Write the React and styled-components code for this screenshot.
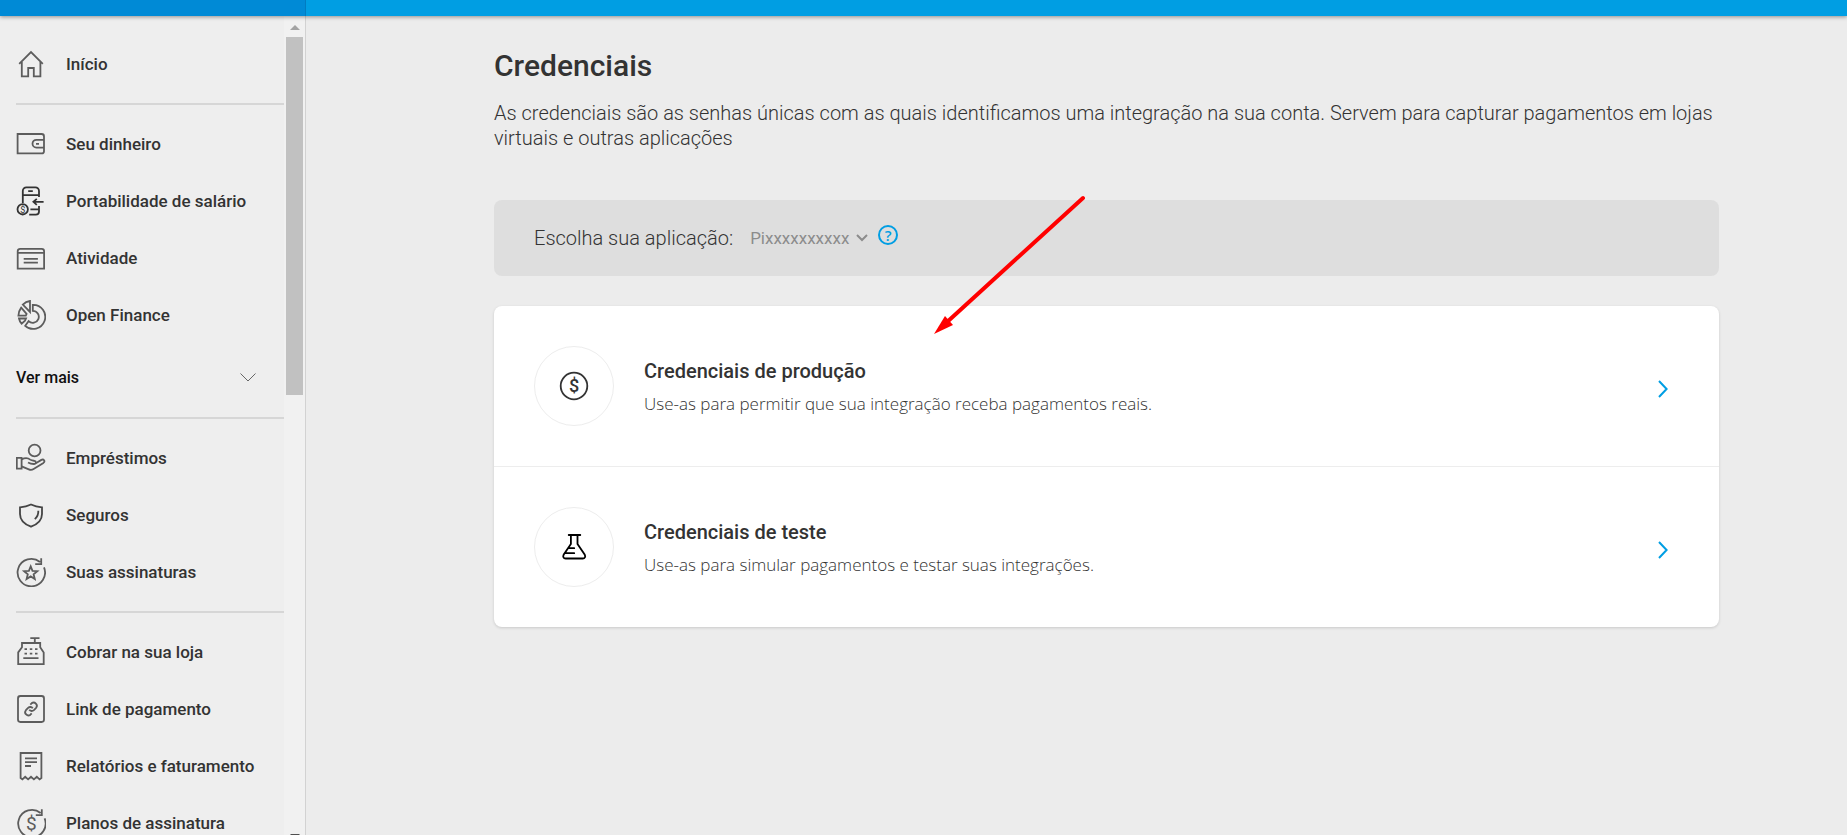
import React, { useState } from "react"
import styled, { createGlobalStyle } from "styled-components"

const GlobalStyle = createGlobalStyle`
	* {
		box-sizing: border-box;
	}
	body {
		margin: 0;
		background-color: #ececec;
		color: #333333;
		font-family: Roboto, "Open Sans", "Liberation Sans", sans-serif;
	}
`

// sidebar icons, all drawn on a 30x30 grid
const icons = {
	home: (
		<>
			<path d="M3.2 14.8 15 3l11.8 11.8" />
			<path d="M5.8 13v14.4h6.4V19h5.6v8.4h6.6V13" />
		</>
	),
	wallet: (
		<>
			<path d="M1.6 5h24A2.4 2.4 0 0 1 28 7.4v14.8a2.2 2.2 0 0 1-2.2 2.2H1.6z" />
			<path d="M28 10.8h-7.6a3.9 3.9 0 0 0 0 7.8H28M20 14.8h3" />
		</>
	),
	phone: (
		<>
			<path d="M6.8 17V5a3.6 3.6 0 0 1 3.6-3.6h9A3.6 3.6 0 0 1 23 5v6M6.8 9.2H23M12.2 5.2h4.6" />
			<path d="M23 20v5.4a3.2 3.2 0 0 1-3.2 3.2h-6.6M14.4 23.4H23M27.6 15.8H18M20.8 12.8l-3.4 3 3.4 3" />
			<circle cx="6.7" cy="23.3" r="5.2" />
			<text x="6.7" y="26.6">
				$
			</text>
		</>
	),
	activity: (
		<>
			<path d="M1.7 25.6V8.2a2.4 2.4 0 0 1 2.4-2.4h21.6a2.4 2.4 0 0 1 2.4 2.4v17.4zM2 9.8h26" />
			<path d="M7.7 15.8h14.2M7.7 19.6h14.2" />
		</>
	),
	finance: (
		<>
			<path d="M16.8 4.9a12 12 0 1 1-7.6 20.9l3.4-4.7a6 6 0 1 0 4.2-10.3z" />
			<path d="M14 1v11L6.8 4.6C8.8 2.6 11.2 1.4 14 1z" />
			<path d="M5.2 7.6l5.4 6.2-.8 1.9H2.4c.2-3.2 1.2-6 2.8-8.1z" />
			<path d="M3 18.5h7l-1 2.3-3.4 2.9c-1.4-1.5-2.2-3.2-2.6-5.2z" />
		</>
	),
	loan: (
		<>
			<circle cx="18.6" cy="7.5" r="5.9" />
			<path d="M.8 14.9h4.8v10.7H.8z" />
			<path d="M5.6 16.4c3.4-1.8 6.4-1.6 8.6.2 1.3 1 2.3 1 4.2 1.2 2 .3 2 3.1-.2 3.2-2.2.1-4.2-.4-6.2-1.5" />
			<path d="M19.8 20.3l5.6-3.4c2.2-1.2 4.2 1.3 2 3L17.6 26c-1.5 1-3.2 1.1-4.8.4l-7.2-3" />
		</>
	),
	shield: (
		<>
			<path d="M15 4.5c3.6 1.8 7.2 2.6 11 2.9V14c0 5.8-4.3 10.2-11 12.7C8.3 24.2 4 19.8 4 14V7.4c3.8-.3 7.4-1.1 11-2.9z" />
			<path d="M22.3 10.8c.2 3.6-.8 6-3.5 8.3" />
		</>
	),
	star: (
		<>
			<path d="M28 10.4a13.7 13.7 0 1 1-4-5.4M25.2 1.2v5.9h-6" />
			<path d="M14.7 9.4l1.8 4.5 4.8.3-3.7 3.1 1.2 4.7-4.1-2.6-4.1 2.6 1.2-4.7-3.7-3.1 4.8-.3z" />
		</>
	),
	register: (
		<>
			<path d="M14.3 1.2h9.2M18.8 1.2V6M6 6h18.2v4.2l3.5 5.2v11.8H2.2V15.4L6 10.2z" />
			<path d="M8.5 12.2H11M13.8 12.2h2.5M19 12.2h2.5M8.5 16.6H11M13.8 16.6h2.5M19 16.6h2.5M7.3 21.2h15.2" />
		</>
	),
	link: (
		<>
			<rect x="2" y="2" width="26" height="26" rx="2.4" />
			<path d="M13.2 15.8a3.2 3.2 0 0 0 4.7.3l2.2-2.3a3.2 3.2 0 0 0-4.5-4.5l-1.3 1.3M16.8 14.2a3.2 3.2 0 0 0-4.7-.3l-2.2 2.3a3.2 3.2 0 0 0 4.5 4.5l1.3-1.3" />
		</>
	),
	receipt: (
		<>
			<path d="M4.6 2h20.8v25l-1.8 1.4-2.8-2.6-2.9 2.6-2.9-2.6-2.9 2.6-2.9-2.6-2.8 2.6L4.6 27z" />
			<path d="M9 7.4h12M9 11.2h12M9 15h6" />
		</>
	),
	plan: (
		<>
			<path d="M28.6 10.4a13.7 13.7 0 1 1-4-5.4M25.8 1.2v5.9h-6" />
			<text x="15.4" y="22">
				$
			</text>
		</>
	),
}

const mainItems = [
	{ icon: "wallet", label: "Seu dinheiro" },
	{ icon: "phone", label: "Portabilidade de salário", color: "#333333" },
	{ icon: "activity", label: "Atividade" },
	{ icon: "finance", label: "Open Finance" },
]

const financialItems = [
	{ icon: "loan", label: "Empréstimos" },
	{ icon: "shield", label: "Seguros", color: "#444444" },
	{ icon: "star", label: "Suas assinaturas" },
]

const sellerItems = [
	{ icon: "register", label: "Cobrar na sua loja" },
	{ icon: "link", label: "Link de pagamento" },
	{ icon: "receipt", label: "Relatórios e faturamento" },
	{ icon: "plan", label: "Planos de assinatura" },
]

const NavItem = ({ item }) => (
	<li>
		<NavLink href="#">
			<NavIcon
				viewBox="0 0 30 30"
				$color={item.color}
				$fontSize={item.icon === "phone" ? 9 : 19}
				aria-hidden="true"
			>
				{icons[item.icon]}
			</NavIcon>
			{item.label}
		</NavLink>
	</li>
)

const CredentialItem = ({ title, text, children }) => (
	<CredentialLink href="#">
		<IconCircle>{children}</IconCircle>
		<CredentialText>
			<h2>{title}</h2>
			<p>{text}</p>
		</CredentialText>
		<ArrowRight viewBox="0 0 10 18" aria-hidden="true">
			<path d="M1 1l7.6 8L1 17" />
		</ArrowRight>
	</CredentialLink>
)

export default function App() {
	const [application, setApplication] = useState("Pixxxxxxxxxx")

	return (
		<Page>
			<GlobalStyle />
			<TopBar>
				<TopBarMenu />
			</TopBar>
			<Body>
				<Sidebar>
					<Nav aria-label="Menu principal">
						<NavGroup>
							<NavItem item={{ icon: "home", label: "Início" }} />
						</NavGroup>
						<NavGroup>
							{mainItems.map((item) => (
								<NavItem item={item} key={item.label} />
							))}
							<li>
								<MoreButton type="button">
									Ver mais
									<svg viewBox="0 0 16 9" width="16" height="9">
										<path d="M.5.5 8 8l7.5-7.5" />
									</svg>
								</MoreButton>
							</li>
						</NavGroup>
						<NavGroup $thick>
							{financialItems.map((item) => (
								<NavItem item={item} key={item.label} />
							))}
						</NavGroup>
						<NavGroup>
							{sellerItems.map((item) => (
								<NavItem item={item} key={item.label} />
							))}
						</NavGroup>
					</Nav>
					<ScrollTrack aria-hidden="true">
						<ScrollArrow $color="#a3a3a3" />
						<ScrollThumb />
						<ScrollArrow $color="#505050" $end />
					</ScrollTrack>
				</Sidebar>
				<Main>
					<Content>
						<Title>Credenciais</Title>
						<Description>
							As credenciais são as senhas únicas com as quais identificamos
							uma integração na sua conta. Servem para capturar pagamentos em
							lojas virtuais e outras aplicações
						</Description>
						<AppSelector>
							<label htmlFor="application">Escolha sua aplicação:</label>
							<SelectBox>
								<select
									id="application"
									value={application}
									onChange={(e) => setApplication(e.target.value)}
								>
									<option>Pixxxxxxxxxx</option>
								</select>
								<svg viewBox="0 0 12 8" width="12" height="8">
									<path d="M1 1l5 5 5-5" />
								</svg>
							</SelectBox>
							<HelpButton type="button" aria-label="Ajuda">
								?
							</HelpButton>
						</AppSelector>
						<Card>
							<CredentialItem
								title="Credenciais de produção"
								text="Use-as para permitir que sua integração receba pagamentos reais."
							>
								<CircleIcon viewBox="0 0 30 30" $color="#333333">
									<circle cx="15" cy="15" r="13.3" />
									<text x="15" y="21.3">
										$
									</text>
								</CircleIcon>
							</CredentialItem>
							<CredentialItem
								title="Credenciais de teste"
								text="Use-as para simular pagamentos e testar suas integrações."
							>
								<CircleIcon viewBox="0 0 30 30" $color="#000000">
									<path d="M9.7 3h11.6M11.9 3v9L4.6 22.8c-1 2 0 3.7 2 3.7h17.2c2 0 3-1.7 2-3.7L18.5 12V3M9.4 16.2h5.8M6.5 21.2h8.7" />
								</CircleIcon>
							</CredentialItem>
						</Card>
						{/* red arrow drawn over the selector and the card */}
						<RedArrow viewBox="0 0 152 140" aria-hidden="true">
							<path d="M149 3 12 128" />
							<polygon points="0,139 11,121 19,130" />
						</RedArrow>
					</Content>
				</Main>
			</Body>
		</Page>
	)
}

const Page = styled.div`
	display: flex;
	flex-direction: column;
	min-height: 100vh;
`
const TopBar = styled.header`
	position: relative;
	z-index: 1;
	display: flex;
	height: 16px;
	background-color: #009ee3;
	box-shadow: 0 1px 4px rgba(0, 0, 0, 0.4);
`
const TopBarMenu = styled.div`
	width: 306px;
	background-color: #008ad6;
	border-right: 1px solid #007cc1;
`
const Body = styled.div`
	display: flex;
	flex: 1;
`
const Sidebar = styled.aside`
	display: flex;
	flex: none;
	width: 306px;
	height: calc(100vh - 16px);
	background-color: #eeeeee;
	border-right: 1px solid #d2d2d2;
`
const Nav = styled.nav`
	flex: 1;
	padding: 9px 0 0 16px;
	overflow-y: auto;
	scrollbar-width: none;
`
const NavGroup = styled.ul`
	margin: 0;
	padding: 10px 0 11px;
	list-style: none;
	& + & {
		border-top: ${(props) => (props.$thick ? "2px" : "1px")} solid #d6d6d6;
	}
`
const NavLink = styled.a`
	display: flex;
	align-items: center;
	gap: 20px;
	height: 57px;
	color: #333333;
	font-size: 17px;
	font-weight: 500;
	white-space: nowrap;
	text-decoration: none;
`
const NavIcon = styled.svg`
	flex: none;
	width: 30px;
	height: 30px;
	fill: none;
	stroke: ${(props) => props.$color || "#5c5c5c"};
	stroke-width: 1.8;
	text {
		fill: ${(props) => props.$color || "#5c5c5c"};
		stroke: none;
		font-size: ${(props) => props.$fontSize}px;
		font-weight: 400;
		text-anchor: middle;
	}
`
const MoreButton = styled.button`
	display: flex;
	align-items: center;
	justify-content: space-between;
	width: 100%;
	height: 57px;
	margin-top: 6px;
	padding: 0 28px 0 0;
	border: 0;
	background: none;
	color: #111111;
	font-family: inherit;
	font-size: 16px;
	font-weight: 500;
	cursor: pointer;
	svg {
		fill: none;
		stroke: #666666;
	}
`
const ScrollTrack = styled.div`
	display: flex;
	flex-direction: column;
	align-items: center;
	width: 21px;
	padding-top: 9px;
	background-color: #f1f1f1;
`
const ScrollArrow = styled.div`
	border: 5px solid transparent;
	border-top-width: ${(props) => (props.$end ? "5px" : "0")};
	border-bottom-width: ${(props) => (props.$end ? "0" : "5px")};
	border-top-color: ${(props) => props.$color};
	border-bottom-color: ${(props) => props.$color};
	margin-top: ${(props) => (props.$end ? "auto" : "0")};
	margin-bottom: ${(props) => (props.$end ? "-4px" : "7px")};
`
const ScrollThumb = styled.div`
	width: 17px;
	height: 358px;
	background-color: #c1c1c1;
`
const Main = styled.main`
	flex: 1;
	padding: 32px 128px 40px 188px;
`
const Content = styled.div`
	position: relative;
`
const Title = styled.h1`
	margin: 0 0 17px;
	font-size: 30px;
	font-weight: 500;
	line-height: 36px;
`
const Description = styled.p`
	margin: 0 0 49px;
	font-size: 20px;
	font-weight: 300;
	line-height: 25px;
`
const AppSelector = styled.div`
	display: flex;
	align-items: center;
	min-height: 76px;
	margin-bottom: 30px;
	padding: 0 40px;
	border-radius: 8px;
	background-color: #dedede;
	label {
		font-size: 20px;
		font-weight: 300;
	}
`
const SelectBox = styled.div`
	display: flex;
	align-items: center;
	gap: 6px;
	margin: 0 10px 0 17px;
	select {
		padding: 0;
		border: 0;
		appearance: none;
		background: none;
		color: #8c8c8c;
		font-family: inherit;
		font-size: 17px;
	}
	svg {
		fill: none;
		stroke: #8c8c8c;
		stroke-width: 2;
	}
`
const HelpButton = styled.button`
	width: 20px;
	height: 20px;
	margin-bottom: 6px;
	padding: 0;
	border: 2px solid #009ee3;
	border-radius: 50%;
	background: none;
	color: #009ee3;
	font-family: "Open Sans", sans-serif;
	font-size: 15px;
	font-weight: 600;
	line-height: 16px;
	cursor: pointer;
`
const Card = styled.section`
	border-radius: 8px;
	background-color: #ffffff;
	box-shadow: 0 1px 3px rgba(0, 0, 0, 0.15);
`
const CredentialLink = styled.a`
	display: flex;
	align-items: center;
	gap: 30px;
	padding: 40px 51px 40px 40px;
	color: #333333;
	text-decoration: none;
	& + & {
		border-top: 1px solid #ededed;
	}
`
const IconCircle = styled.div`
	display: flex;
	flex: none;
	align-items: center;
	justify-content: center;
	width: 80px;
	height: 80px;
	border: 1px solid #ededed;
	border-radius: 50%;
`
const CircleIcon = styled.svg`
	width: 30px;
	height: 30px;
	fill: none;
	stroke: ${(props) => props.$color};
	stroke-width: 1.8;
	stroke-linecap: round;
	text {
		fill: ${(props) => props.$color};
		stroke: none;
		font-size: 18px;
		font-weight: 500;
		text-anchor: middle;
	}
`
const CredentialText = styled.div`
	flex: 1;
	padding-top: 2px;
	line-height: 24px;
	h2 {
		margin: 0 0 9px;
		font-size: 20px;
		font-weight: 500;
	}
	p {
		margin: 0;
		font-family: "Open Sans", sans-serif;
		font-size: 17px;
		font-weight: 300;
	}
`
const ArrowRight = styled.svg`
	width: 10px;
	height: 18px;
	margin-top: 6px;
	fill: none;
	stroke: #009ee3;
	stroke-width: 2;
`
const RedArrow = styled.svg`
	position: absolute;
	top: 147px;
	left: 440px;
	width: 152px;
	height: 140px;
	pointer-events: none;
	path {
		fill: none;
		stroke: #ff0000;
		stroke-width: 4;
		stroke-linecap: round;
	}
	polygon {
		fill: #ff0000;
	}
`
